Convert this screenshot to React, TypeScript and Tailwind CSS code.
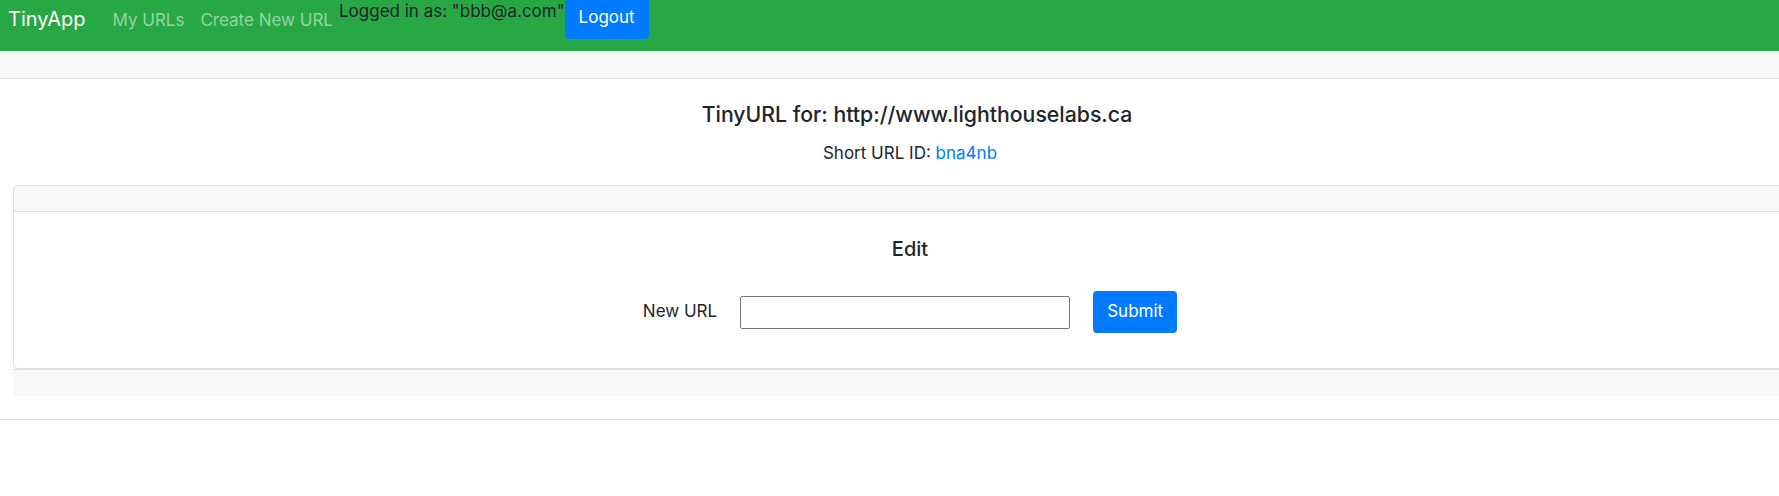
const FONT = "font-['Inter','Liberation_Sans',sans-serif]";

function Navbar() {
  return (
    <nav className="h-[51px] bg-[#28a745] flex items-start">
      {/* Brand */}
      <a className="ml-[8px] mt-[4px] text-[20px] leading-[30px] text-white">TinyApp</a>

      {/* Links */}
      <a className="ml-[27px] mt-[8px] text-[17px] leading-[25.5px] text-white/50">My URLs</a>
      <a className="ml-[16px] mt-[8px] text-[17px] leading-[25.5px] text-white/50">Create New URL</a>

      {/* User */}
      <span className="ml-[6px] -mt-px text-[17px] leading-[25.5px] text-[#212529]">
        Logged in as: "bbb@a.com"
      </span>
      <button className="-mt-[3px] h-[42px] px-[14px] rounded-[4px] bg-[#007bff] text-white text-[17px] leading-[25.5px]">
        Logout
      </button>
    </nav>
  );
}

function EditCard() {
  return (
    <div className="mt-[19px]">
      <div className="border border-[#dfdfdf] rounded-[4px]">
        <div className="h-[26px] bg-[#f7f7f7] border-b border-[#dfdfdf] rounded-t-[4px]" />
        <div className="h-[156px] flex flex-col items-center">
          <h5 className="mt-[25px] text-[20px] leading-[24px] font-medium text-[#212529]">Edit</h5>
          <form className="mt-[30px] flex items-center" onSubmit={(e) => e.preventDefault()}>
            <label className="text-[17px] leading-[25.5px] text-[#212529]">New URL</label>
            <input
              type="text"
              className="ml-[23px] w-[330px] h-[33px] border border-[#767676] rounded-[2px] bg-white"
            />
            <button
              type="submit"
              className="ml-[23px] h-[42px] px-[14px] rounded-[4px] bg-[#007bff] text-white text-[17px] leading-[25.5px]"
            >
              Submit
            </button>
          </form>
        </div>
      </div>
      <div className="h-[27px] bg-[#f7f7f7] border-t border-[#dfdfdf] rounded-b-[4px]" />
    </div>
  );
}

export default function App() {
  return (
    <div className={`w-[1779px] h-[496px] overflow-hidden bg-white ${FONT}`}>
      <Navbar />
      <div className="h-[28px] bg-[#f7f7f7] border-b border-[#dfdfdf]" />
      <div className="h-[341px] border-b border-[#dfdfdf]">
        <div className="ml-[13px] w-[1794px] flex flex-col">
          <h4 className="mt-[21px] pl-[14px] text-center text-[21.25px] leading-[29px] font-medium text-[#212529]">
            TinyURL for: http://www.lighthouselabs.ca
          </h4>
          <p className="mt-[11px] text-center text-[17px] leading-[26px] text-[#212529]">
            Short URL ID: <a className="text-[#007bff]">bna4nb</a>
          </p>
          <EditCard />
        </div>
      </div>
    </div>
  );
}
